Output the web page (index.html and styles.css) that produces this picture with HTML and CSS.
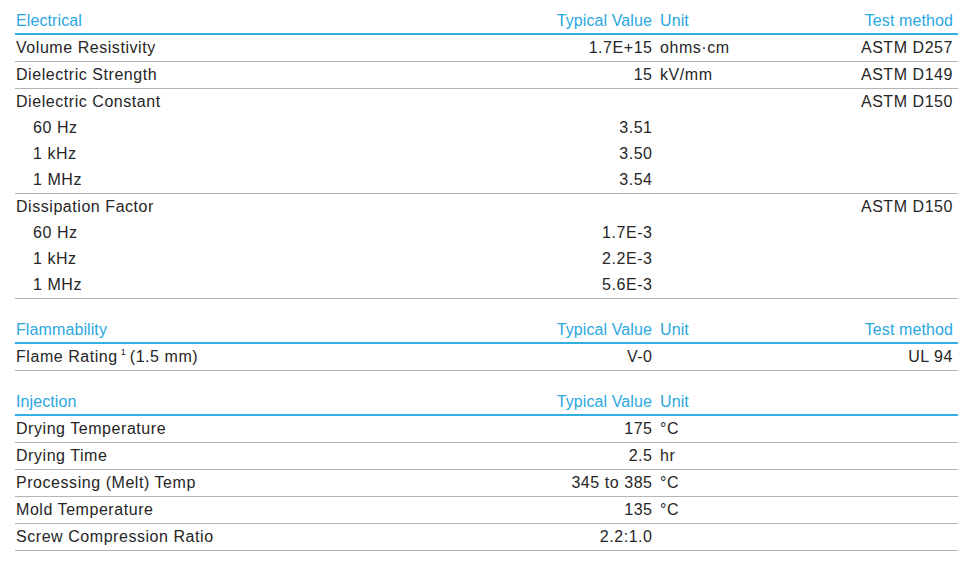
FILE: index.html
```html
<!DOCTYPE html>
<html>
<head>
<meta charset="utf-8">
<link rel="stylesheet" href="styles.css">
</head>
<body>
<div class="sheet">
  <section class="section">
    <div class="row head">
      <div class="c-label">Electrical</div>
      <div class="c-val">Typical Value</div>
      <div class="c-unit">Unit</div>
      <div class="c-test">Test method</div>
    </div>
    <div class="row line">
      <div class="c-label">Volume Resistivity</div>
      <div class="c-val">1.7E+15</div>
      <div class="c-unit">ohms·cm</div>
      <div class="c-test">ASTM D257</div>
    </div>
    <div class="row line">
      <div class="c-label">Dielectric Strength</div>
      <div class="c-val">15</div>
      <div class="c-unit">kV/mm</div>
      <div class="c-test">ASTM D149</div>
    </div>
    <div class="group">
      <div class="row">
        <div class="c-label">Dielectric Constant</div>
        <div class="c-val"></div>
        <div class="c-unit"></div>
        <div class="c-test">ASTM D150</div>
      </div>
      <div class="row sub"><div class="c-label">60 Hz</div><div class="c-val">3.51</div><div class="c-unit"></div><div class="c-test"></div></div>
      <div class="row sub"><div class="c-label">1 kHz</div><div class="c-val">3.50</div><div class="c-unit"></div><div class="c-test"></div></div>
      <div class="row sub"><div class="c-label">1 MHz</div><div class="c-val">3.54</div><div class="c-unit"></div><div class="c-test"></div></div>
    </div>
    <div class="group">
      <div class="row">
        <div class="c-label">Dissipation Factor</div>
        <div class="c-val"></div>
        <div class="c-unit"></div>
        <div class="c-test">ASTM D150</div>
      </div>
      <div class="row sub"><div class="c-label">60 Hz</div><div class="c-val">1.7E-3</div><div class="c-unit"></div><div class="c-test"></div></div>
      <div class="row sub"><div class="c-label">1 kHz</div><div class="c-val">2.2E-3</div><div class="c-unit"></div><div class="c-test"></div></div>
      <div class="row sub"><div class="c-label">1 MHz</div><div class="c-val">5.6E-3</div><div class="c-unit"></div><div class="c-test"></div></div>
    </div>
  </section>

  <section class="section">
    <div class="row head">
      <div class="c-label">Flammability</div>
      <div class="c-val">Typical Value</div>
      <div class="c-unit">Unit</div>
      <div class="c-test">Test method</div>
    </div>
    <div class="row line">
      <div class="c-label">Flame Rating<sup class="fn">1</sup> (1.5 mm)</div>
      <div class="c-val">V-0</div>
      <div class="c-unit"></div>
      <div class="c-test">UL 94</div>
    </div>
  </section>

  <section class="section">
    <div class="row head">
      <div class="c-label">Injection</div>
      <div class="c-val">Typical Value</div>
      <div class="c-unit">Unit</div>
      <div class="c-test"></div>
    </div>
    <div class="row line">
      <div class="c-label">Drying Temperature</div>
      <div class="c-val">175</div>
      <div class="c-unit">°C</div>
      <div class="c-test"></div>
    </div>
    <div class="row line">
      <div class="c-label">Drying Time</div>
      <div class="c-val">2.5</div>
      <div class="c-unit">hr</div>
      <div class="c-test"></div>
    </div>
    <div class="row line">
      <div class="c-label">Processing (Melt) Temp</div>
      <div class="c-val">345 to 385</div>
      <div class="c-unit">°C</div>
      <div class="c-test"></div>
    </div>
    <div class="row line">
      <div class="c-label">Mold Temperature</div>
      <div class="c-val">135</div>
      <div class="c-unit">°C</div>
      <div class="c-test"></div>
    </div>
    <div class="row line">
      <div class="c-label">Screw Compression Ratio</div>
      <div class="c-val">2.2:1.0</div>
      <div class="c-unit"></div>
      <div class="c-test"></div>
    </div>
  </section>
</div>
</body>
</html>
```

FILE: styles.css
```css
html, body {
  margin: 0;
  padding: 0;
  background: #ffffff;
}

body {
  font-family: "Liberation Sans", Arial, sans-serif;
  font-size: 16px;
  letter-spacing: 0.55px;
  color: #262626;
}

.sheet {
  margin: 8px 0 0 15px;
  width: 943px;
  display: flex;
  flex-direction: column;
  gap: 18px;
}

.section {
  display: flex;
  flex-direction: column;
}

.row {
  display: grid;
  grid-template-columns: 537px 100px 136px 1fr;
  height: 26px;
  line-height: 26px;
  white-space: nowrap;
}

.row.head {
  height: 25px;
  line-height: 26px;
  letter-spacing: 0.1px;
  color: #2aa8df;
  border-bottom: 2px solid #33b0e3;
}

.row.line {
  border-bottom: 1px solid #b4b4b4;
}

.group {
  border-bottom: 1px solid #b4b4b4;
}

.c-label {
  padding-left: 1px;
}

.sub .c-label {
  padding-left: 18px;
}

.c-val {
  text-align: right;
  margin-right: -0.55px;
}

.head .c-val {
  margin-right: 0;
}

.c-unit {
  padding-left: 8px;
}

.c-test {
  text-align: right;
  padding-right: 5px;
}

.fn {
  font-size: 9px;
  letter-spacing: 0;
  line-height: 0;
  vertical-align: 7px;
  margin-left: 3px;
  margin-right: -1px;
}
```
